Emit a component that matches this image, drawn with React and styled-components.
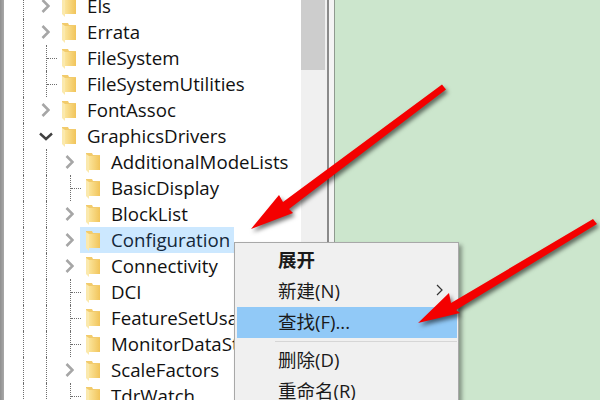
import React from 'react'
import styled, { createGlobalStyle } from 'styled-components'

const GlobalStyle = createGlobalStyle`
    html, body {
        margin: 0;
        padding: 0;
        background: #fff;
    }
    #root {
        width: 600px;
        height: 400px;
        overflow: hidden;
    }
`
const Screen = styled.div`
    position: relative;
    width: 600px;
    height: 400px;
    display: flex;
    overflow: hidden;
    font-family: "Open Sans", "Noto Sans CJK SC", sans-serif;
`
const WindowEdge = styled.div`
    width: 4px;
    background: linear-gradient(to right, #8f8f8f, #a9a9a9);
`
const TreePane = styled.div`
    width: 297px;
    height: 400px;
    overflow: hidden;
    background: #fff;
`
const TreeList = styled.div`
    margin-top: -7px;
`
const Row = styled.div`
    height: 26px;
    display: flex;
    align-items: stretch;
`
const Gutter = styled.div`
    width: ${({w})=>w}px;
    box-sizing: border-box;
    border-right: 1px dotted #6e6e6e;
`
const Toggle = styled.div`
    width: ${({depth})=>depth===1 ? 32 : 33}px;
    flex-shrink: 0;
    display: flex;
    align-items: center;
`
const ChevronBox = styled.svg`
    display: block;
    margin-left: ${({depth,open})=>open ? 15 : depth===1 ? 17 : 18}px;
`
const Elbow = styled.div`
    margin-left: ${({depth})=>depth===1 ? 22 : 23}px;
    height: 100%;
    display: flex;
    align-items: center;
    border-left: 1px dotted #6e6e6e;
`
const Stub = styled.span`
    width: 10px;
    border-top: 1px dotted #6e6e6e;
`
const Node = styled.div`
    display: flex;
    align-items: center;
    gap: 11px;
    padding: 0 4px 0 6px;
    background: ${({selected})=>selected ? '#cce8ff' : 'transparent'};
`
const Label = styled.span`
    font-size: 18.7px;
    line-height: 26px;
    color: ${({selected})=>selected ? '#14273a' : '#111'};
    white-space: nowrap;
`
const Scrollbar = styled.div`
    width: 26px;
    height: 400px;
    background: #f0f0f0;
`
const Thumb = styled.div`
    width: 24px;
    height: 70px;
    background: #cdcdcd;
`
const Splitter = styled.div`
    width: 5px;
    border-left: 2px solid #8a8a8a;
    border-right: 1px solid #8f9a8f;
    background: #f4f4f4;
`
const GreenPane = styled.div`
    flex: 1;
    background: #cce6cd;
`
const Menu = styled.div`
    position: absolute;
    left: 234px;
    top: 242px;
    width: 225px;
    height: 170px;
    box-sizing: border-box;
    padding: 2px 1px 2px 2px;
    background: #f0f0f0;
    border: 1px solid #a8a8a8;
    box-shadow: 3px 3px 4px rgba(0,0,0,.35);
`
const MenuItem = styled.div`
    height: 31px;
    box-sizing: border-box;
    padding: 0 13px 3px 41px;
    display: flex;
    align-items: center;
    justify-content: space-between;
    font-size: 18.5px;
    font-weight: ${({bold})=>bold ? 700 : 400};
    color: #1a1a1a;
    background: ${({active})=>active ? '#91c9f7' : 'transparent'};
    white-space: nowrap;
`
const MenuRule = styled.div`
    height: 1px;
    margin: 3px 0 3px 38px;
    background: #d6d6d6;
`
const ArrowLayer = styled.svg`
    position: absolute;
    left: 0;
    top: 0;
    filter: drop-shadow(2px 3px 2px rgba(0,0,0,.55));
`

const rows = [
    {name:'Els', depth:1, kind:'closed'},
    {name:'Errata', depth:1, kind:'closed'},
    {name:'FileSystem', depth:1, kind:'leaf'},
    {name:'FileSystemUtilities', depth:1, kind:'leaf'},
    {name:'FontAssoc', depth:1, kind:'closed'},
    {name:'GraphicsDrivers', depth:1, kind:'open'},
    {name:'AdditionalModeLists', depth:2, kind:'closed'},
    {name:'BasicDisplay', depth:2, kind:'leaf'},
    {name:'BlockList', depth:2, kind:'closed'},
    {name:'Configuration', depth:2, kind:'closed', selected:true},
    {name:'Connectivity', depth:2, kind:'closed'},
    {name:'DCI', depth:2, kind:'leaf'},
    {name:'FeatureSetUsage', depth:2, kind:'leaf'},
    {name:'MonitorDataStore', depth:2, kind:'leaf'},
    {name:'ScaleFactors', depth:2, kind:'closed'},
    {name:'TdrWatch', depth:2, kind:'leaf'},
]

const Folder = () => (
    <svg width="14" height="21" viewBox="0 0 14 21">
        <defs>
            <linearGradient id="folderFront" x1="0" y1="0" x2="1" y2="0">
                <stop offset="0" stopColor="#fbe49a" />
                <stop offset="1" stopColor="#f1c45a" />
            </linearGradient>
        </defs>
        <path d="M0 1h6l1 2h7v15H0z" fill="#f2cb6c" />
        <path d="M0 2l3 2v17l-3-3z" fill="#fbe9ad" />
        <path d="M3 4h11v14H3z" fill="url(#folderFront)" />
    </svg>
)

const Twisty = ({depth, kind}) => {
    if(kind==='leaf'){
        return <Elbow depth={depth}><Stub /></Elbow>
    }
    if(kind==='open'){
        return (
            <ChevronBox depth={depth} open width="14" height="9" viewBox="0 0 14 9">
                <path d="M1 1.5l6 5.5 6-5.5" fill="none" stroke="#404040" strokeWidth="2.4" />
            </ChevronBox>
        )
    }
    return (
        <ChevronBox depth={depth} width="9" height="14" viewBox="0 0 9 14">
            <path d="M1.5 1l6 6-6 6" fill="none" stroke="#a6a6a6" strokeWidth="2.6" />
        </ChevronBox>
    )
}

const TreeRow = ({name, depth, kind, selected}) => (
    <Row>
        <Gutter w={20} />
        {depth===2 && <Gutter w={23} />}
        <Toggle depth={depth}>
            <Twisty depth={depth} kind={kind} />
        </Toggle>
        <Node selected={selected}>
            <Folder />
            <Label selected={selected}>{name}</Label>
        </Node>
    </Row>
)

const App = () => (
    <Screen>
        <GlobalStyle />
        <WindowEdge />
        <TreePane>
            <TreeList>
                {rows.map((item)=><TreeRow key={item.name} {...item} />)}
            </TreeList>
        </TreePane>
        <Scrollbar><Thumb /></Scrollbar>
        <Splitter />
        <GreenPane />
        <Menu>
            <MenuItem bold>展开</MenuItem>
            <MenuItem>
                新建(N)
                <svg width="8" height="12" viewBox="0 0 8 12">
                    <path d="M1 1l5 5-5 5" fill="none" stroke="#333" strokeWidth="1.2" />
                </svg>
            </MenuItem>
            <MenuItem active>查找(F)...</MenuItem>
            <MenuRule />
            <MenuItem>删除(D)</MenuItem>
            <MenuItem>重命名(R)</MenuItem>
        </Menu>
        <ArrowLayer width="600" height="400" viewBox="0 0 600 400">
            <path d="M442 84.5L446 89.5L289 209L293 213L251 229L279 195L283 202z" fill="#f40000" />
            <path d="M593 219L597 224L456 310L460 313L418 323L449 293L451 303z" fill="#f40000" />
        </ArrowLayer>
    </Screen>
)

export default App
